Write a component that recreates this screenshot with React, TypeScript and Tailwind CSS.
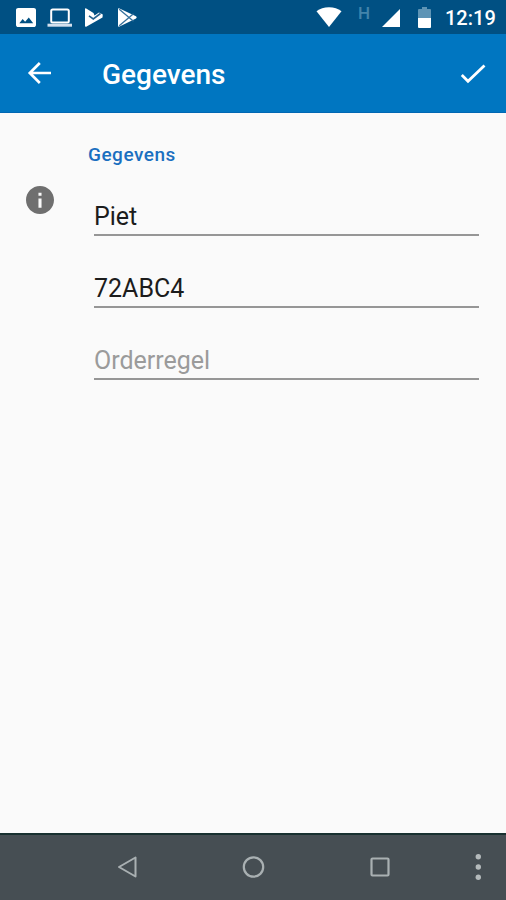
const fields = [
  { value: 'Piet', placeholder: false },
  { value: '72ABC4', placeholder: false },
  { value: 'Orderregel', placeholder: true },
];

function StatusBar() {
  return (
    <div className="flex h-[34px] shrink-0 items-start bg-[#005083] text-white">
      <svg className="mt-2 ml-[16px] h-[19px] w-[20px]" viewBox="3 3 18 18" preserveAspectRatio="none" fill="currentColor">
        <path d="M21 19V5c0-1.100-.9-2-2-2H5c-1.100 0-2 .9-2 2v14c0 1.100.9 2 2 2h14c1.100 0 2-.9 2-2zM6 17.500l3-4 2.200 2.600 3.300-4.200 4 5.600z" />
      </svg>
      <svg className="mt-2 ml-[11px] h-[19px] w-[26px]" viewBox="0 0 26 19">
        <rect x="4.200" y="1.500" width="17.600" height="13" rx="1.500" fill="none" stroke="currentColor" strokeWidth="2" />
        <path d="M0.500 15.700h24.500v3h-24.500z" fill="#d3e0ee" />
      </svg>
      <svg className="mt-2 ml-3 h-[19px] w-[19px]" viewBox="0 0 19 19">
        <path d="M0 1Q0 0 1.200 .4L8.500 5 9.500 7.500 14 4.500 17.800 6.500 17.500 9.500 1.200 18.700Q0 19 0 18z" fill="currentColor" />
        <path d="M4 7.800l4.300 3.200 7.200-5.500" fill="none" stroke="#24618f" strokeWidth="1.600" />
      </svg>
      <svg className="mt-2 ml-[14px] h-[19px] w-[20px]" viewBox="0 0 20 19">
        <path d="M0 1.200Q0 0 1.500 .4L18 8.200Q19.500 9.300 18 10.400L1.500 18.600Q0 19 0 17.500z" fill="currentColor" />
        <path d="M1.200 1.200l14.300 12M1.200 17.800l14.300-12" fill="none" stroke="#36719d" strokeWidth="1.300" />
      </svg>
      <svg className="mt-[7px] ml-[178px] h-[20px] w-[26px]" viewBox="0 0 26 20" fill="currentColor">
        <path d="M13 20L.5 4.300C4 1.500 8 .2 13 .2s9 1.300 12.500 4.100z" />
      </svg>
      <span className="mt-[4px] ml-[16px] w-[13px] font-[Roboto,sans-serif] text-[17px] leading-[18px] font-medium text-[#4384ab]">H</span>
      <svg className="mt-[9px] ml-[11px] h-[18px] w-[18px]" viewBox="0 0 18 18" fill="currentColor">
        <path d="M18 0v18H0z" />
      </svg>
      <svg className="mt-[7px] ml-[18px] h-[21px] w-[13px]" viewBox="0 0 13 21">
        <path d="M4 0h5v2h3q1 0 1 1v8H0V3q0-1 1-1h3z" fill="#5e94b5" />
        <path d="M0 11h13v9q0 1-1 1H1q-1 0-1-1z" fill="currentColor" />
      </svg>
      <span className="mt-[6px] ml-[14px] font-[Roboto,sans-serif] text-[20px] leading-[24px] font-medium">12:19</span>
    </div>
  );
}

function AppBar() {
  return (
    <header className="flex h-[79px] shrink-0 items-center border-b border-[#0067b3] bg-[#0076c1] text-white">
      <svg className="ml-[27px] h-[24px] w-[25px]" viewBox="0 0 25 24" fill="none" stroke="currentColor" strokeWidth="2.700">
        <path d="M12.800 2L2.800 12l10 10M2.800 12h21.200" />
      </svg>
      <h1 className="mt-[3px] ml-[50px] flex-1 font-[Roboto,sans-serif] text-[28px] leading-[32px] font-medium">Gegevens</h1>
      <svg className="mt-px mr-[20px] h-[20px] w-[26px]" viewBox="0 0 26 20" fill="none" stroke="currentColor" strokeWidth="2.800">
        <path d="M1.800 11l6.200 6.200L24.500 1.500" />
      </svg>
    </header>
  );
}

function NavigationBar() {
  return (
    <nav className="flex h-[67px] shrink-0 items-center border-t-2 border-[#183030] bg-[#464e53] pb-[2px] text-[#a9b0b2]">
      <svg className="ml-[117px] h-[24px] w-[20px]" viewBox="0 0 20 24" fill="none" stroke="currentColor" strokeWidth="2">
        <path d="M18.500 2.500v19L2 12z" strokeLinejoin="round" />
      </svg>
      <svg className="ml-[105px] h-[24px] w-[24px]" viewBox="0 0 24 24" fill="none" stroke="currentColor" strokeWidth="2.200">
        <circle cx="11.500" cy="12" r="9.700" />
      </svg>
      <svg className="ml-[104px] h-[20px] w-[20px]" viewBox="0 0 20 20" fill="none" stroke="currentColor" strokeWidth="2.200">
        <rect x="1.500" y="1.500" width="17" height="17" rx="1" />
      </svg>
      <svg className="ml-[84px] h-[28px] w-[8px]" viewBox="0 0 8 28" fill="#b4babb">
        <circle cx="4.300" cy="3.800" r="2.700" />
        <circle cx="4.300" cy="14" r="2.700" />
        <circle cx="4.300" cy="24.200" r="2.700" />
      </svg>
    </nav>
  );
}

export default function App() {
  return (
    <div className="flex h-[900px] w-[506px] flex-col bg-[#fafafa] font-[Roboto,sans-serif]">
      <StatusBar />
      <AppBar />
      <main className="flex flex-1 items-start">
        <svg className="mt-[73px] ml-[26px] h-[28px] w-[28px]" viewBox="2 2 20 20" fill="#6f6f6f">
          <path d="M12 2C6.480 2 2 6.480 2 12s4.480 10 10 10 10-4.480 10-10S17.520 2 12 2zm1.100 15.500h-2.200v-6.500h2.200v6.500zm0-8.500h-2.200V6.800h2.200v2.200z" />
        </svg>
        <div className="ml-[34px] w-[391px] pt-[30px]">
          <h2 className="text-[19px] leading-6 font-medium tracking-[0.5px] text-[#1a6fc0]">Gegevens</h2>
          <div className="mt-[14px] ml-[6px]">
            {fields.map((field) => (
              <div key={field.value} className="mb-[17px] flex h-[55px] items-end">
                <div
                  className={
                    field.placeholder
                      ? 'h-[35px] w-full border-b-2 border-[#969696] text-[25px] leading-[32px] text-[#9b9b9b]'
                      : 'h-[35px] w-full border-b-2 border-[#969696] text-[25px] leading-[32px] text-[#1c1c1c]'
                  }
                >
                  {field.value}
                </div>
              </div>
            ))}
          </div>
        </div>
      </main>
      <NavigationBar />
    </div>
  );
}
